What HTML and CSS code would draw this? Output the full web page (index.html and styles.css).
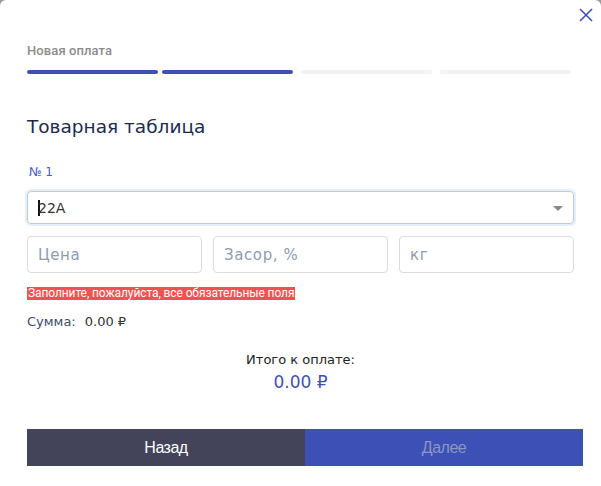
FILE: index.html
```html
<!DOCTYPE html>
<html lang="ru">
<head>
<meta charset="utf-8">
<link rel="stylesheet" href="styles.css">
</head>
<body>
<div class="modal">
  <button class="close" aria-label="Закрыть">
    <svg width="14" height="14" viewBox="0 0 14 14"><path d="M1 1 L13 13 M13 1 L1 13" stroke="#3f51b5" stroke-width="1.6" fill="none"/></svg>
  </button>
  <div class="head">Новая оплата</div>
  <div class="steps">
    <span class="step on"></span>
    <span class="step on s2"></span>
    <span class="step s3"></span>
    <span class="step s3"></span>
  </div>
  <h2 class="title">Товарная таблица</h2>
  <div class="num">№ 1</div>
  <div class="select">
    <span class="val"><span class="caret"></span>22A</span>
    <span class="arrow"></span>
  </div>
  <div class="row">
    <div class="field">Цена</div>
    <div class="field">Засор, %</div>
    <div class="field">кг</div>
  </div>
  <div class="error">Заполните, пожалуйста, все обязательные поля</div>
  <div class="sum"><span class="sum-label">Сумма:</span><span class="sum-val">0.00 ₽</span></div>
  <div class="total">
    <div class="total-label">Итого к оплате:</div>
    <div class="total-val">0.00 ₽</div>
  </div>
  <div class="actions">
    <button class="btn back">Назад</button>
    <button class="btn next">Далее</button>
  </div>
</div>
</body>
</html>
```
FILE: styles.css
```css
html, body {
  margin: 0;
  padding: 0;
  background: #fff;
}
body {
  background: linear-gradient(#9a9a9a, #9a9a9a) top / 100% 8px no-repeat, #fff;
}
.modal {
  position: relative;
  width: 601px;
  height: 486px;
  box-sizing: border-box;
  background: #fff;
  border-radius: 6px 6px 0 0;
  padding: 44px 27px 0 27px;
  font-family: "DejaVu Sans", sans-serif;
  overflow: hidden;
}
.close {
  position: absolute;
  top: 8px;
  right: 8px;
  border: 0;
  background: none;
  padding: 0;
  width: 14px;
  height: 14px;
  cursor: pointer;
}
.close svg { display: block; }
.head {
  font-family: "Roboto", sans-serif;
  font-weight: 500;
  font-size: 13px;
  line-height: 14px;
  color: #8c8c8c;
  letter-spacing: 0.1px;
}
.steps {
  display: flex;
  margin-top: 12px;
}
.step {
  width: 131px;
  height: 4px;
  border-radius: 2px;
  background: #f2f2f2;
}
.step.on { background: #3f51b5; }
.step.s2 { margin-left: 4px; }
.step.s3 { margin-left: 8px; }
.title {
  margin: 42px 0 0 0;
  font-weight: normal;
  font-size: 18.5px;
  line-height: 22px;
  color: #1c2a4f;
}
.num {
  margin-top: 26px;
  padding-left: 2px;
  font-size: 12px;
  line-height: 16px;
  color: #4a5cc5;
}
.select {
  margin-top: 11px;
  height: 33px;
  box-sizing: border-box;
  border: 1px solid #c8c8c8;
  border-radius: 4px;
  box-shadow: 0 0 0 2px #e3effc;
  display: flex;
  align-items: center;
  justify-content: space-between;
  padding: 0 10px 0 10px;
  font-size: 14px;
  color: #333;
}
.val { display: flex; align-items: center; }
.caret {
  display: inline-block;
  width: 2px;
  height: 16px;
  background: #111;
  margin-right: -2px;
}
.arrow {
  width: 0;
  height: 0;
  border-left: 5px solid transparent;
  border-right: 5px solid transparent;
  border-top: 5px solid #888;
  margin-top: 1px;
}
.row {
  display: grid;
  grid-template-columns: repeat(3, 1fr);
  gap: 11px;
  margin-top: 12px;
}
.field {
  height: 37px;
  box-sizing: border-box;
  border: 1px solid #dcdcdc;
  border-radius: 4px;
  display: flex;
  align-items: center;
  padding-left: 10px;
  font-size: 15px;
  letter-spacing: 0.6px;
  color: #8d9cb0;
}
.error {
  margin-top: 14px;
  display: inline-block;
  background: #f55050;
  color: #fff;
  font-family: "Roboto", sans-serif;
  font-size: 12px;
  line-height: 13px;
  padding: 0 1px;
  letter-spacing: -0.1px;
}
.sum {
  margin-top: 13px;
  font-size: 13px;
  line-height: 16px;
  display: flex;
  gap: 9px;
}
.sum-label { color: #3d4a6b; }
.sum-val { color: #333; }
.total {
  margin-top: 22px;
  text-align: center;
}
.total-label {
  font-size: 13px;
  line-height: 16px;
  color: #222;
}
.total-val {
  margin-top: 3px;
  font-size: 17px;
  line-height: 22px;
  color: #3f51b5;
}
.actions {
  display: grid;
  grid-template-columns: 1fr 1fr;
  margin-top: 36px;
  margin-right: -9px;
}
.btn {
  height: 37px;
  border: 0;
  font-family: "Liberation Sans", sans-serif;
  font-size: 16px;
  letter-spacing: -0.5px;
}
.back { background: #43435a; color: #fff; }
.next { background: #3d50b5; color: #8b97c8; }
```
